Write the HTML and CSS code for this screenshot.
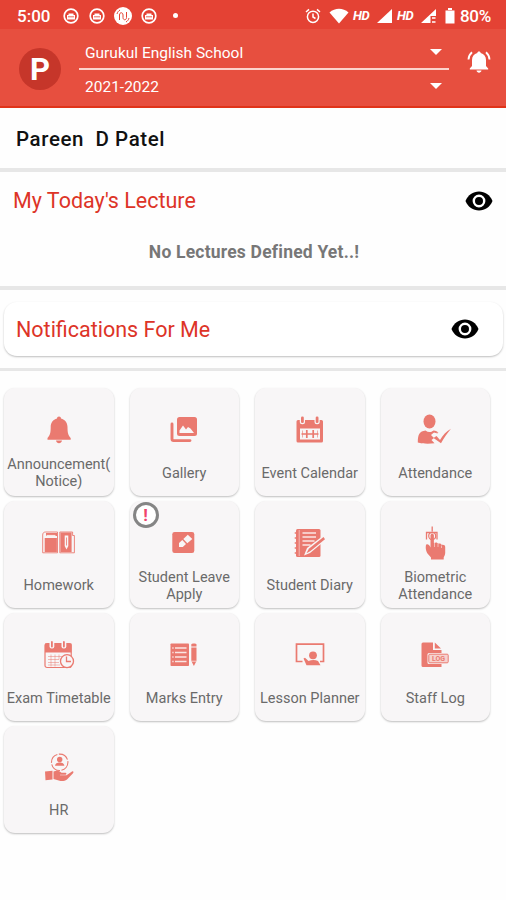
FILE: index.html
```
<!DOCTYPE html>
<html lang="en">
<head>
  <meta charset="UTF-8">
  <meta name="viewport" content="width=device-width, initial-scale=1.0">
  <title>Gurukul English School</title>
  <link rel="stylesheet" href="styles.css">
</head>
<body>
  <svg width="0" height="0" class="defs">
    <symbol id="face" viewBox="0 0 16 16">
      <circle cx="8" cy="8" r="6.8" fill="none" stroke="#fff" stroke-width="1.7"/>
      <path d="M4 7h8v4.5H4zM5.5 7V5.500h5V7" fill="#fff"/>
      <path d="M5 8.800h6" stroke="#e44234" stroke-width=".8"/>
    </symbol>
    <symbol id="eye" viewBox="0 0 28 20">
      <path d="M14 .5C8 .5 3 4 .5 10 3 16 8 19.500 14 19.500S25 16 27.500 10C25 4 20 .5 14 .5z"/>
      <circle cx="14" cy="10" r="5.200" fill="#000" stroke="#fff" stroke-width="2.400"/>
    </symbol>
  </svg>

  <div class="status">
    <span class="clock">5:00</span>
    <svg class="s-icon"><use href="#face"/></svg>
    <svg class="s-icon"><use href="#face"/></svg>
    <svg class="s-icon big" viewBox="0 0 18 18">
      <circle cx="9" cy="9" r="9" fill="#fff"/>
      <path d="M5.500 13V8c0-3 3.500-3 3.500 0v2.500c0 3 3.500 3 3.500 0V5M3 7c.5-2 1.500-3 3-4M15 11c-.5 2-1.500 3-3 4" fill="none" stroke="#e44234" stroke-width="1"/>
    </svg>
    <svg class="s-icon"><use href="#face"/></svg>
    <span class="dot"></span>
    <div class="status-right">
      <svg width="16" height="16" viewBox="0 0 16 16" fill="none" stroke="#fff" stroke-width="1.500">
        <circle cx="8" cy="8.800" r="5.600"/>
        <path d="M8 5.500v3.500l2.500 1.500M1 4l3-2.600M15 4l-3-2.600"/>
      </svg>
      <svg class="wifi" width="20" height="16" viewBox="0 0 20 16"><path d="M.5 4.500C6-.5 14-.5 19.500 4.500L10 15.500z" fill="#fff"/></svg>
      <span class="hd">HD</span>
      <svg class="signal" width="16" height="16" viewBox="0 0 16 16"><path d="M15 1v14H0z" fill="#fff"/></svg>
      <span class="hd">HD</span>
      <svg class="signal" width="16" height="16" viewBox="0 0 16 16">
        <path d="M15 1v7H9.500v7H0z" fill="#fff"/>
        <path d="M11 10h3.500M11 14h3.500" stroke="#fff" stroke-width="1.400"/>
      </svg>
      <svg class="battery" width="10" height="16" viewBox="0 0 10 16"><path d="M3 0h4v2h-4zM.5 2.500h9V15.500h-9z" fill="#fff"/></svg>
      <span class="percent">80%</span>
    </div>
  </div>

  <div class="header">
    <div class="avatar">P</div>
    <div class="selects">
      <div class="select">Gurukul English School<i></i></div>
      <div class="select year">2021-2022<i></i></div>
    </div>
    <svg class="bell" width="24" height="24" viewBox="0 0 24 24">
      <path d="M12 1.500c1 0 1.700.6 1.700 1.600 3.300.8 5.300 3.400 5.300 6.900v6l2.200 2.600v.9H2.800v-.9L5 16v-6c0-3.500 2-6.100 5.300-6.900 0-1 .7-1.600 1.700-1.600zM9.500 20.500h5c-.3 1.400-1.200 2.200-2.500 2.200s-2.200-.8-2.500-2.200z" fill="#fff"/>
      <path d="M1.500 9.500C1.700 6 3 4 5 2.300M22.500 9.500C22.300 6 21 4 19 2.300" fill="none" stroke="#fff" stroke-width="1.900"/>
    </svg>
  </div>

  <div class="name">Pareen&nbsp; D Patel</div>

  <div class="lecture">
    <div class="lecture-head">
      <h2>My Today's Lecture</h2>
      <svg class="eye"><use href="#eye"/></svg>
    </div>
    <p>No Lectures Defined Yet..!</p>
  </div>

  <div class="notify">
    <div class="notify-card">
      <h2>Notifications For Me</h2>
      <svg class="eye"><use href="#eye"/></svg>
    </div>
  </div>

  <div class="menu">
    <div class="tile">
      <svg viewBox="0 0 36 36">
        <path d="M18 4.500c1.200 0 2 .8 2 2 4 1 6.500 4.200 6.500 8.500 0 6 .8 8.500 3.200 11v1.700H6.500V26c2.400-2.500 3.200-5 3.200-11 0-4.300 2.300-7.500 6.300-8.500 0-1.200.8-2 2-2zM15 28.500h6c-.4 1.800-1.500 2.700-3 2.700s-2.600-.9-3-2.700z"/>
      </svg>
      <span>Announcement(<br>Notice)</span>
    </div>
    <div class="tile">
      <svg viewBox="0 0 36 36">
        <rect x="11" y="5" width="20" height="19" rx="2.500"/>
        <path d="M6 12v15a1.600 1.600 0 0 0 1.600 1.600H24" class="line" stroke-width="2.900" stroke-linecap="round"/>
        <path d="M13.500 21v-2.500l3.500-5 3 4 2-2.500 2.500 1.500 3.500 4.500z" class="cut"/>
      </svg>
      <span>Gallery</span>
    </div>
    <div class="tile">
      <svg viewBox="0 0 36 36">
        <path d="M6 8h23.500a1.500 1.500 0 0 1 1.500 1.500V29a1.500 1.500 0 0 1-1.500 1.500H6A1.500 1.500 0 0 1 4.500 29V9.500A1.500 1.500 0 0 1 6 8z"/>
        <rect x="7.800" y="3.500" width="5.200" height="8.800" rx="2.500" class="cut"/>
        <rect x="22.500" y="3.500" width="5.200" height="8.800" rx="2.500" class="cut"/>
        <rect x="9" y="4.500" width="2.800" height="6.500" rx="1.300"/>
        <rect x="23.700" y="4.500" width="2.800" height="6.500" rx="1.300"/>
        <path d="M8 16.500h20v11H8z" class="cut"/>
        <path d="M9.500 22h17M14.800 18v8M21.200 18v8" class="line" stroke-width="1.700"/>
        <path d="M10.500 18.500v7M25.500 18.500v7" class="line" stroke-width=".6"/>
      </svg>
      <span>Event Calendar</span>
    </div>
    <div class="tile">
      <svg viewBox="0 0 36 36">
        <ellipse cx="12.500" cy="9.500" rx="6" ry="7"/>
        <path d="M.8 30.500C.8 22 2.500 19.500 8.500 18.500c2.500 2 5.500 2 8 0 2.500.4 4 1 5 2.500l-4-1-3.500 3 3 3-2.500 2 3 3.200C12 32 5 31.800.8 30.500z"/>
        <path d="M16.500 26l3-2 3.500 4c3-5 6-8.500 11-11.200-3.500 4.200-7 9.200-10 14.400z"/>
        <path d="M15.500 19.500l5 1.500" class="line" stroke-width="1"/>
      </svg>
      <span>Attendance</span>
    </div>

    <div class="tile">
      <svg viewBox="0 0 36 36">
        <path d="M1.700 10c0-2 1-3 3-3h11.800v20.800H1.700zM18.800 7h12.800v3.500h1.800v17.300H18.800z" class="line" stroke-width=".9"/>
        <path d="M3.700 13h12.200v14H3.700zM5 8h11v3H5zM19.400 7.500h11.200v19.500H19.400z"/>
        <path d="M5.500 10.500h9" class="line light" stroke-width="1.200"/>
        <path d="M23.700 10.500h3.600v10.500l-1.800 3.500-1.800-3.500z" class="cut"/>
        <path d="M25.500 12.500v8" class="line" stroke-width=".8"/>
      </svg>
      <span>Homework</span>
    </div>
    <div class="tile">
      <b class="alert">!</b>
      <svg viewBox="0 0 36 36">
        <rect x="6.300" y="7" width="22" height="21" rx="2.300"/>
        <path d="M13 22v-4l3.300-3 3.700 4-3.200 3zM17.300 14l4.500-4.200 4.500 4.200-5 4.200z" class="cut"/>
      </svg>
      <span>Student Leave Apply</span>
    </div>
    <div class="tile">
      <svg viewBox="0 0 36 36">
        <rect x="4" y="4" width="24.500" height="28" rx="1.500"/>
        <path d="M10.500 8h13.500M10.500 12h13.500M10.500 16h12M10.500 20h8" class="line light" stroke-width="1.600"/>
        <path d="M7.200 5v26" class="line light" stroke-width=".6"/>
        <path d="M2.700 8h3M2.700 13h3M2.700 18h3M2.700 23h3M2.700 28h3" class="line" stroke-width="1.300"/>
        <path d="M12 30.500l3-7.500L31.500 10.500l3 4L18 28z" class="cut"/>
        <path d="M14.500 28.300l2.300-4.500L31.500 12l1.500 2.200L18.500 26z"/>
      </svg>
      <span>Student Diary</span>
    </div>
    <div class="tile">
      <svg viewBox="0 0 36 36">
        <path d="M13.500 10.500c0-2.200 3.400-2.200 3.400 0V18c2.500-1.200 3.700-.4 4 .8 2-.7 3.400-.2 3.700 1.200 2-.5 3.600.3 3.600 2v6c0 2-1 3-1.500 4.500v2H14v-2c-1.500-2.200-4-3.500-4.700-6.500-.8-2.500-.7-5.500 0-6.500 1.700-.6 3 .5 4.200 3z"/>
        <path d="M9.500 14.500V7.500h10.500V14.500M15.200 1.500v5" class="line" stroke-width="1.300"/>
        <circle cx="15.200" cy="11" r="3.500" class="line" stroke-width="1.200"/>
        <path d="M17.500 18v4M21 19v3M24.500 20.500v2.500" class="line light" stroke-width=".6"/>
      </svg>
      <span>Biometric Attendance</span>
    </div>

    <div class="tile">
      <svg viewBox="0 0 36 36">
        <rect x="4" y="6.500" width="26.200" height="24" rx="2" class="line" stroke-width="1.200"/>
        <path d="M4 6.500h26.500v9H4z"/>
        <rect x="8.500" y="3" width="4.800" height="8.500" rx="2" class="cut"/>
        <rect x="20.500" y="3" width="4.800" height="8.500" rx="2" class="cut"/>
        <path d="M10.900 5v4.500M22.900 5v4.500" class="line" stroke-width="1.800" stroke-linecap="round"/>
        <path d="M7 19.500h14M7 22.500h11M7 25.500h11M7 28h12M10 17.500v12M14 17.500v12M18 17.500v5" class="line" stroke-width=".7" opacity=".7"/>
        <circle cx="26" cy="24.200" r="6.500" class="cut edge" stroke-width="1.300"/>
        <path d="M25.500 19.500v5h4.500" class="line" stroke-width="1.300"/>
      </svg>
      <span>Exam Timetable</span>
    </div>
    <div class="tile">
      <svg viewBox="0 0 36 36">
        <rect x="4.500" y="6.500" width="18.500" height="22.500" rx=".8"/>
        <path d="M9 11h11.500M9 15.500h11.500M9 20h11.500M9 24.500h11.500M6.300 11h1.300M6.300 15.500h1.300M6.300 20h1.300M6.300 24.500h1.300" class="line light" stroke-width="1.300"/>
        <path d="M25.300 10.500h5.200V24l-2.600 5-2.600-5zM25.300 7.500c0-1.300 5.200-1.300 5.200 0v2h-5.200z"/>
        <path d="M25 24.200h5.800" class="line light" stroke-width=".8"/>
      </svg>
      <span>Marks Entry</span>
    </div>
    <div class="tile">
      <svg viewBox="0 0 36 36">
        <path d="M10.500 24.500H4.500V7.200h27V24.500H28" class="line" stroke-width="1.700"/>
        <circle cx="21" cy="18.300" r="3.900"/>
        <path d="M11.500 21.500l1.500-.7 3.500 3.200c3-1.200 7-1.200 9.500 0l2.500 4.300H14.500z"/>
      </svg>
      <span>Lesson Planner</span>
    </div>
    <div class="tile">
      <svg viewBox="0 0 36 36">
        <path d="M6 5.500h10v7.500h8.500V30H6A1.500 1.500 0 0 1 4.500 28.500V7A1.500 1.500 0 0 1 6 5.500zM17.800 5.500l6.200 6h-6.200z"/>
        <rect x="10.500" y="16" width="21.500" height="11" rx="1.500" class="cut"/>
        <rect x="11.800" y="17.200" width="19.400" height="8.600" rx="1" class="tint edge" stroke-width="1"/>
        <text x="21.500" y="24.200" class="log">LOG</text>
      </svg>
      <span>Staff Log</span>
    </div>

    <div class="tile">
      <svg viewBox="0 0 36 36">
        <path d="M4 21.500l7.500-.8V29.500l-7 .8zM12.500 21.500c4-1.500 6-.5 8 1.200h4c1.200 0 1.200 2 0 2H19v.6h6.500l5.500-3.800c1.500-.6 2 .8.8 2L26 29.500c-2 1.500-4 1.700-6.500 1.500l-7-2z"/>
        <circle cx="18.700" cy="12.300" r="8.200" class="line" stroke-width="1.100" stroke-dasharray="11 1.500"/>
        <circle cx="18.700" cy="9.500" r="2.700"/>
        <path d="M14 15.800c0-4.500 9.400-4.500 9.400 0z"/>
      </svg>
      <span>HR</span>
    </div>
  </div>
</body>
</html>
```

FILE: styles.css
```
* {
  box-sizing: border-box;
}
body {
  margin: 0;
  width: 506px;
  height: 900px;
  background: #fefefe;
  font-family: Roboto, "Liberation Sans", sans-serif;
  overflow: hidden;
}
.defs {
  display: block;
}
.status {
  display: flex;
  align-items: center;
  height: 29px;
  padding: 2px 14px 0 17px;
  background: #e44234;
  color: #fff;
}
.clock {
  width: 46px;
  font-size: 17px;
  font-weight: 500;
}
.s-icon {
  width: 16px;
  height: 16px;
  margin-right: 10px;
}
.s-icon.big {
  width: 18px;
  height: 18px;
  margin: 0 9px 0 -1px;
}
.dot {
  width: 5px;
  height: 5px;
  margin-left: 6px;
  border-radius: 50%;
  background: #fff;
}
.status-right {
  display: flex;
  align-items: center;
  margin-left: auto;
}
.wifi {
  margin: 0 4px 0 8px;
}
.hd {
  width: 18px;
  font-size: 13px;
  font-weight: 700;
  font-style: italic;
  letter-spacing: -0.3px;
}
.signal {
  margin: 0 4px 0 6px;
}
.battery {
  margin: 0 5px 0 4px;
}
.percent {
  width: 32px;
  font-size: 17px;
  font-weight: 500;
  letter-spacing: -0.3px;
}
.header {
  display: flex;
  height: 79px;
  padding-left: 19px;
  background: #e74f3f;
  border-bottom: 2px solid #e0341a;
  color: #fff;
}
.avatar {
  width: 42px;
  height: 42px;
  margin-top: 19px;
  border-radius: 50%;
  background: #c6362a;
  font-size: 31px;
  font-weight: 700;
  line-height: 43px;
  text-align: center;
}
.selects {
  width: 370px;
  margin-left: 18px;
}
.select {
  display: flex;
  align-items: center;
  justify-content: space-between;
  height: 41px;
  padding: 8px 7px 0 6px;
  border-bottom: 2px solid #fcd3cc;
  font-size: 15.5px;
}
.select.year {
  height: 34px;
  padding-top: 0;
  border: 0;
}
.select i {
  margin-top: -2px;
  border: 6px solid transparent;
  border-top-color: #fff;
  border-bottom: 0;
}
.bell {
  margin: 21px 0 0 18px;
}
.name {
  height: 64px;
  padding-left: 16px;
  border-bottom: 4px solid #e7e7e7;
  color: #111;
  font-size: 20.5px;
  font-weight: 500;
  letter-spacing: 0.6px;
  line-height: 63px;
}
h2 {
  margin: 0;
  color: #dd3427;
  font-size: 21.5px;
  font-weight: 400;
}
.eye {
  width: 28px;
  height: 20px;
}
.lecture {
  height: 118px;
  border-bottom: 4px solid #e7e7e7;
}
.lecture-head {
  display: flex;
  align-items: center;
  justify-content: space-between;
  height: 57px;
  padding: 0 13px;
}
.lecture p {
  margin: 12px 0 0 2px;
  color: #777;
  font-size: 17.5px;
  font-weight: 700;
  letter-spacing: 0.2px;
  line-height: 22px;
  text-align: center;
}
.notify {
  height: 81px;
  padding: 12px 3px 0 4px;
  border-bottom: 3px solid #e7e7e7;
}
.notify-card {
  display: flex;
  align-items: center;
  justify-content: space-between;
  height: 54px;
  padding: 0 24px 0 12px;
  border-radius: 13px;
  background: #fff;
  box-shadow: 0 1px 2px rgba(0, 0, 0, 0.25);
}
.menu {
  display: grid;
  grid-template-columns: repeat(4, 109.5px);
  grid-auto-rows: 107.5px;
  gap: 5px 16px;
  padding: 17px 0 0 4px;
}
.tile {
  position: relative;
  display: flex;
  flex-direction: column;
  align-items: center;
  padding-top: 24px;
  border-radius: 11px;
  background: #f8f6f7;
  box-shadow: 0 1px 2px rgba(0, 0, 0, 0.25);
}
.tile svg {
  width: 36px;
  height: 36px;
  fill: #ea7a70;
}
.tile span {
  display: flex;
  align-items: center;
  justify-content: center;
  width: 109px;
  height: 34px;
  margin-top: 8px;
  color: #6a6a6a;
  font-size: 14.5px;
  line-height: 17px;
  text-align: center;
}
.tile .line {
  fill: none;
  stroke: #ea7a70;
}
.tile .light {
  stroke: #fbe6e3;
}
.tile .cut {
  fill: #f8f6f7;
}
.tile .tint {
  fill: #f6d3cf;
}
.tile .edge {
  stroke: #ea7a70;
}
.log {
  font-size: 7px;
  font-weight: 700;
  text-anchor: middle;
}
.alert {
  position: absolute;
  top: 1px;
  left: 3px;
  width: 26px;
  height: 26px;
  border: 3px solid #858585;
  border-radius: 50%;
  background: #fff;
  color: #f0426b;
  font-size: 17px;
  line-height: 20px;
  text-align: center;
}
```
